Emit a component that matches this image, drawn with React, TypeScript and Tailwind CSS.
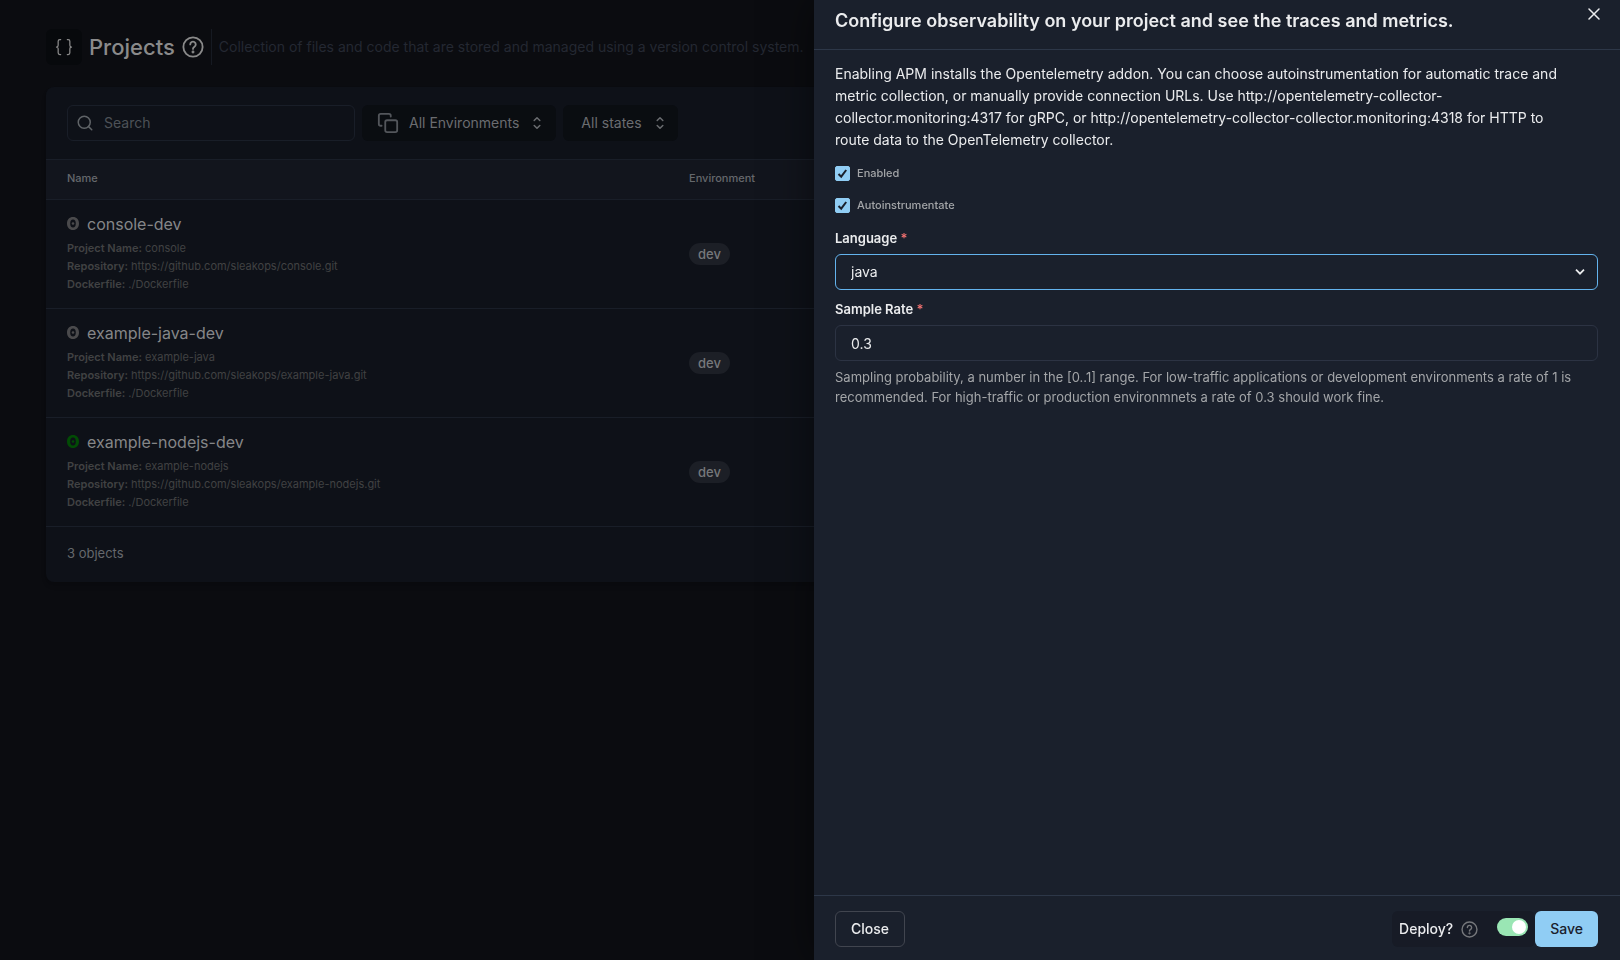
import { useState } from "react";
import { FiCopy, FiSearch } from "react-icons/fi";
import { LuBraces } from "react-icons/lu";

const projects = [
  { name: "console-dev", project: "console", repo: "https://github.com/sleakops/console.git", color: "text-[#4a4a4c]" },
  { name: "example-java-dev", project: "example-java", repo: "https://github.com/sleakops/example-java.git", color: "text-[#4a4a4c]" },
  { name: "example-nodejs-dev", project: "example-nodejs", repo: "https://github.com/sleakops/example-nodejs.git", color: "text-[#024b05]" },
];

function HelpIcon({ className }: { className: string }) {
  return (
    <svg viewBox="0 0 24 24" className={className} fill="none" stroke="currentColor" strokeLinecap="round" strokeLinejoin="round">
      <circle cx="12" cy="12" r="10.5" />
      <path d="M9 9.2a3 3 0 1 1 4.6 2.5c-.9.6-1.6 1.1-1.6 2.1v.3" />
      <circle cx="12" cy="17.4" r="0.6" fill="currentColor" />
    </svg>
  );
}

function StatusIcon({ className }: { className: string }) {
  return (
    <svg viewBox="0 0 12 13" className={className} fill="currentColor">
      <path fillRule="evenodd" d="M6 0c3.6 0 6 2.6 6 6.5S9.6 13 6 13 0 10.4 0 6.5 2.4 0 6 0zm0 2.5C4.2 2.5 3.2 4 3.2 6.5s1 4 2.8 4 2.8-1.5 2.8-4-1-4-2.8-4z" />
      <circle cx="6" cy="6.5" r="1.3" />
    </svg>
  );
}

function SelectorIcon() {
  return (
    <svg viewBox="0 0 8 14" className="h-[14px] w-2" fill="none" stroke="currentColor" strokeWidth="1.5" strokeLinecap="round" strokeLinejoin="round">
      <path d="M1.2 4.5L4 1.7l2.8 2.8M1.2 9.5L4 12.3l2.8-2.8" />
    </svg>
  );
}

function Header() {
  return (
    <header className="flex items-center">
      <div className="flex size-9 shrink-0 items-center justify-center rounded-md bg-[#07090c]">
        <LuBraces className="size-5 text-[#8a8a8a]" strokeWidth={1.5} />
      </div>
      <h1 className="ml-[7px] text-[22px] leading-9 font-medium text-[#8a8a8a]">Projects</h1>
      <button type="button" aria-label="About projects" className="ml-[7px] text-[#8a8a8a]">
        <HelpIcon className="size-[22px] stroke-2" />
      </button>
      <div className="ml-[7px] h-9 w-px shrink-0 bg-[#161a22]" />
      <p className="ml-[7px] truncate text-sm text-[#242832]">
        Collection of files and code that are stored and managed using a version control system.
      </p>
    </header>
  );
}

function Toolbar() {
  return (
    <div className="flex gap-[7px] px-[21px] py-[18px]">
      <label className="flex h-9 w-72 items-center gap-[10px] rounded-md border border-[#191e28] px-2">
        <FiSearch className="size-[18px] text-[#606468]" />
        <input type="search" aria-label="Search" placeholder="Search" className="min-w-0 flex-1 bg-transparent text-sm text-[#7b7d80] outline-none placeholder:text-[#4d5157]" />
      </label>
      <button type="button" className="flex h-9 items-center rounded-md bg-[#0a0d11] px-[15px] text-sm text-[#6a6c70]">
        <FiCopy className="mr-[10px] size-[22px] text-[#53565b]" strokeWidth={2} />
        <span className="mr-[14px]">All Environments</span>
        <SelectorIcon />
      </button>
      <button type="button" className="flex h-9 items-center rounded-md bg-[#0a0d11] pr-[14px] pl-[18px] text-sm text-[#6a6c70]">
        <span className="mr-[14px]">All states</span>
        <SelectorIcon />
      </button>
    </div>
  );
}

function ProjectsTable() {
  return (
    <table className="w-full table-fixed border-collapse text-left">
      <thead>
        <tr className="h-10 border-y border-[#191e28] bg-[#12151d] text-[11px] text-[#65686c]">
          <th className="w-[622px] px-[21px] pb-[2px] font-medium">Name</th>
          <th className="px-[21px] pb-[2px] font-medium">Environment</th>
        </tr>
      </thead>
      <tbody>
        {projects.map((p) => (
          <tr key={p.name} className="h-[109px] border-b border-[#191e28]">
            <td className="px-[21px] pb-[3px]">
              <div className="flex items-center gap-2">
                <StatusIcon className={`mb-[2px] h-[13px] w-3 ${p.color}`} />
                <a href="#" className="text-base text-[#858688]">{p.name}</a>
              </div>
              <div className="mt-[3px] text-[11px] leading-[18px] text-[#414243]">
                <div><b className="font-semibold">Project Name:</b> {p.project}</div>
                <div><b className="font-semibold">Repository:</b> {p.repo}</div>
                <div><b className="font-semibold">Dockerfile:</b> ./Dockerfile</div>
              </div>
            </td>
            <td className="px-[21px] pb-[2px]">
              <span className="inline-block rounded-full bg-[#1c1f26] px-[9px] text-[13px] leading-[22px] font-medium text-[#76787b]">
                dev
              </span>
            </td>
          </tr>
        ))}
      </tbody>
    </table>
  );
}

function Checkbox({ id, label }: { id: string; label: string }) {
  return (
    <div className="flex h-4 items-center gap-[7px]">
      <span className="relative flex size-[15px]">
        <input id={id} type="checkbox" defaultChecked className="peer size-[15px] appearance-none rounded-xs border border-[#90cdf4] checked:bg-[#90cdf4]" />
        <svg viewBox="0 0 15 15" className="pointer-events-none absolute inset-0 hidden text-[#1a202c] peer-checked:block" fill="none" stroke="currentColor" strokeWidth="2">
          <path d="M3.5 8l2.7 2.7L11.2 4" />
        </svg>
      </span>
      <label htmlFor={id} className="text-[11px] font-medium text-[#a3a5a8]">{label}</label>
    </div>
  );
}

function Drawer() {
  const [rate, setRate] = useState("0.3");

  return (
    <aside role="dialog" aria-labelledby="drawer-title" className="fixed inset-y-0 right-0 flex w-[806px] max-w-full flex-col bg-[#1a202c] text-[#ebecee] shadow-[0_0_40px_rgba(0,0,0,0.5)]">
      <header className="flex h-[50px] shrink-0 items-start justify-between border-b border-[#2d3748] pr-[19px] pl-[21px]">
        <h2 id="drawer-title" className="pt-2 text-lg leading-[26px] font-semibold">
          Configure observability on your project and see the traces and metrics.
        </h2>
        <button type="button" aria-label="Close drawer" className="mt-[7px]">
          <svg viewBox="0 0 12 12" className="m-px size-3" fill="none" stroke="currentColor" strokeWidth="1.5" strokeLinecap="round">
            <path d="M1 1l10 10M11 1L1 11" />
          </svg>
        </button>
      </header>

      <div className="flex-1 overflow-y-auto pt-[13px] pr-[22px] pl-[21px]">
        <p className="pr-5 text-sm leading-[22px]">
          Enabling APM installs the Opentelemetry addon. You can choose autoinstrumentation for automatic trace and
          metric collection, or manually provide connection URLs. Use http://opentelemetry-collector-collector.monitoring:4317
          for gRPC, or http://opentelemetry-collector-collector.monitoring:4318 for HTTP to route data to the
          OpenTelemetry collector.
        </p>
        <div className="mt-[14px] flex flex-col gap-4">
          <Checkbox id="enabled" label="Enabled" />
          <Checkbox id="autoinstrumentate" label="Autoinstrumentate" />
        </div>

        <label htmlFor="language" className="mt-[15px] block text-[13px] leading-5 font-semibold">
          Language <span className="text-[#f07070]">*</span>
        </label>
        <div className="relative mt-[6px]">
          <select id="language" defaultValue="java" className="h-9 w-full appearance-none rounded-md border border-[#63b3ed] bg-transparent px-[15px] text-sm outline-none">
            <option value="java">java</option>
            <option value="nodejs">nodejs</option>
            <option value="python">python</option>
          </select>
          <svg viewBox="0 0 10 6" className="pointer-events-none absolute top-[15px] right-[13px] h-[6px] w-[10px]" fill="none" stroke="currentColor" strokeWidth="1.75">
            <path d="M1 .7l4 4 4-4" />
          </svg>
        </div>

        <label htmlFor="sample-rate" className="mt-[9px] block text-[13px] leading-5 font-semibold">
          Sample Rate <span className="text-[#f07070]">*</span>
        </label>
        <input id="sample-rate" type="text" value={rate} onChange={(e) => setRate(e.target.value)} className="mt-[6px] block h-9 w-full rounded-md border border-[#2c3343] bg-transparent px-[15px] text-sm outline-none" />
        <p className="mt-[6px] text-[13px] leading-5 text-[#a3a5a8]">
          Sampling probability, a number in the [0..1] range. For low-traffic applications or development environments a
          rate of 1 is recommended. For high-traffic or production environmnets a rate of 0.3 should work fine.
        </p>
      </div>

      <footer className="flex shrink-0 items-center justify-between border-t border-[#2d3748] pt-[15px] pr-[22px] pb-[13px] pl-[21px]">
        <button type="button" className="h-9 rounded-md border border-[#41454f] px-[15px] text-sm font-medium">
          Close
        </button>
        <div className="flex">
          <div className="flex h-9 items-center rounded-md bg-[#171b26] px-[7px]">
            <label htmlFor="deploy" className="text-sm font-medium">Deploy?</label>
            <HelpIcon className="ml-2 size-[17px] stroke-2 text-[#75777b]" />
            <input
              id="deploy"
              type="checkbox"
              role="switch"
              defaultChecked
              className="mb-1 ml-[19px] h-[18px] w-[31px] appearance-none rounded-full bg-[#4a5568] p-[2px] before:block before:size-[14px] before:rounded-full before:bg-white checked:bg-[#9ae6b4] checked:before:ml-[13px]"
            />
          </div>
          <button type="button" className="h-9 rounded-md bg-[#90cdf4] px-[15px] text-sm font-medium text-[#1a202c]">
            Save
          </button>
        </div>
      </footer>
    </aside>
  );
}

export default function App() {
  return (
    <div className="min-h-screen bg-[#0b0c10] font-['Inter',sans-serif]">
      <main className="px-[46px] pt-[29px]">
        <Header />
        <section className="mt-[22px] rounded-lg bg-[#0e1118] shadow-md">
          <Toolbar />
          <ProjectsTable />
          <div className="px-[21px] pt-[15px] pb-[18px] text-[13px] leading-[22px] text-[#65686c]">3 objects</div>
        </section>
      </main>
      <Drawer />
    </div>
  );
}
